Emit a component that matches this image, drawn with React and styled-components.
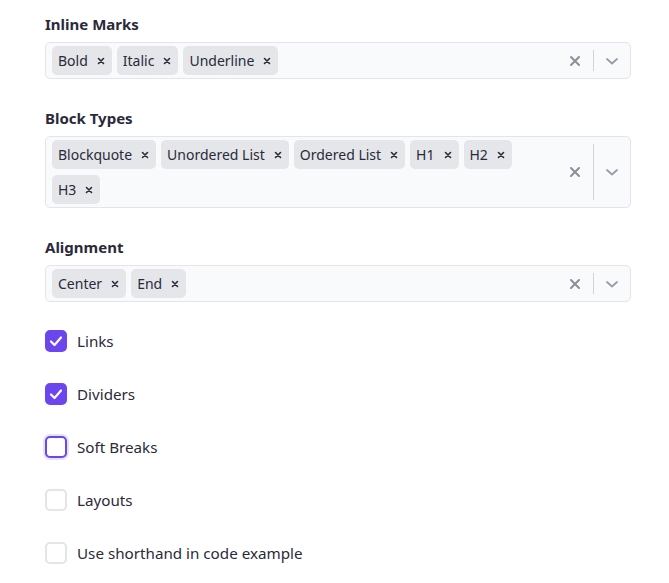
import React from 'react';
import styled, { createGlobalStyle } from 'styled-components';

const GlobalStyle = createGlobalStyle`
  body {
    margin: 0;
    background: #ffffff;
    font-family: "Noto Sans", "Open Sans", sans-serif;
    color: #2b2a3a;
  }
`;

const fields = [
  { label: 'Inline Marks', values: ['Bold', 'Italic', 'Underline'] },
  { label: 'Block Types', values: ['Blockquote', 'Unordered List', 'Ordered List', 'H1', 'H2', 'H3'] },
  { label: 'Alignment', values: ['Center', 'End'] },
];

const options = [
  { label: 'Links', checked: true },
  { label: 'Dividers', checked: true },
  { label: 'Soft Breaks', checked: false, focused: true },
  { label: 'Layouts', checked: false },
  { label: 'Use shorthand in code example', checked: false },
];

const SmallX = () => (
  <svg width="8" height="8" viewBox="0 0 8 8">
    <path d="M1.5 1.5 L6.5 6.5 M6.5 1.5 L1.5 6.5" stroke="#2b2a3a" strokeWidth="1.6" strokeLinecap="round" />
  </svg>
);

const ClearIcon = () => (
  <svg width="12" height="12" viewBox="0 0 12 12">
    <path d="M2 2 L10 10 M10 2 L2 10" stroke="#8e8d99" strokeWidth="2" strokeLinecap="round" />
  </svg>
);

const Chevron = () => (
  <svg width="14" height="10" viewBox="0 0 14 10">
    <path d="M2 3 L7 7.5 L12 3" stroke="#9b9aa6" strokeWidth="1.8" fill="none" strokeLinecap="round" strokeLinejoin="round" />
  </svg>
);

const Check = () => (
  <svg width="14" height="12" viewBox="0 0 14 12">
    <path d="M2 6.5 L5.5 10 L12 2.5" stroke="#ffffff" strokeWidth="2.2" fill="none" strokeLinecap="round" strokeLinejoin="round" />
  </svg>
);

const App = () => {
  return (
    <Page>
      <GlobalStyle />
      {fields.map((f) => (
        <Field key={f.label}>
          <Label>{f.label}</Label>
          <SelectBox>
            <Values>
              {f.values.map((v) => (
                <Chip key={v}>
                  <ChipText>{v}</ChipText>
                  <ChipRemove><SmallX /></ChipRemove>
                </Chip>
              ))}
            </Values>
            <Indicators>
              <IndicatorButton><ClearIcon /></IndicatorButton>
              <Separator />
              <IndicatorButton><Chevron /></IndicatorButton>
            </Indicators>
          </SelectBox>
        </Field>
      ))}
      <Checks>
        {options.map((o) => (
          <CheckRow key={o.label}>
            <Box $checked={o.checked} $focused={o.focused}>
              {o.checked && <Check />}
            </Box>
            <CheckLabel>{o.label}</CheckLabel>
          </CheckRow>
        ))}
      </Checks>
    </Page>
  );
};

const Page = styled.div`
  width: 586px;
  padding: 13px 0 0 45px;
  display: flex;
  flex-direction: column;
`;

const Field = styled.div`
  display: flex;
  flex-direction: column;
  gap: 7px;
  margin-bottom: 28px;
`;

const Label = styled.div`
  font-size: 15px;
  font-weight: 700;
  line-height: 22px;
`;

const SelectBox = styled.div`
  display: flex;
  align-items: stretch;
  min-height: 37px;
  box-sizing: border-box;
  border: 1px solid #e3e5ea;
  border-radius: 5px;
  background: #f9fafb;
`;

const Values = styled.div`
  flex: 1;
  display: flex;
  flex-wrap: wrap;
  align-items: center;
  gap: 6px 5px;
  padding: 3px 6px;
`;

const Chip = styled.div`
  display: flex;
  align-items: center;
  height: 29px;
  background: #e4e6ea;
  border-radius: 5px;
  padding: 0 7px 0 6px;
  gap: 9px;
`;

const ChipText = styled.span`
  font-size: 14px;
  color: #2b2a3a;
`;

const ChipRemove = styled.span`
  display: flex;
  align-items: center;
`;

const Indicators = styled.div`
  display: flex;
  align-items: center;
  padding: 7px 0;
`;

const IndicatorButton = styled.div`
  display: flex;
  align-items: center;
  justify-content: center;
  width: 36px;
  align-self: center;
`;

const Separator = styled.div`
  width: 1px;
  align-self: stretch;
  background: #d2d3da;
`;

const Checks = styled.div`
  display: flex;
  flex-direction: column;
  gap: 31px;
`;

const CheckRow = styled.div`
  display: flex;
  align-items: center;
  gap: 10px;
`;

const Box = styled.div`
  width: 22px;
  height: 22px;
  box-sizing: border-box;
  border-radius: 5px;
  display: flex;
  align-items: center;
  justify-content: center;
  background: ${(p) => (p.$checked ? '#6b46ef' : '#ffffff')};
  border: 2px solid ${(p) => (p.$checked || p.$focused ? '#6b46ef' : '#e3e5ea')};
  box-shadow: ${(p) => (p.$focused ? '0 0 0 2px #e5e3ee' : 'none')};
`;

const CheckLabel = styled.span`
  font-size: 15.2px;
  color: #2b2a3a;
`;

export default App;
